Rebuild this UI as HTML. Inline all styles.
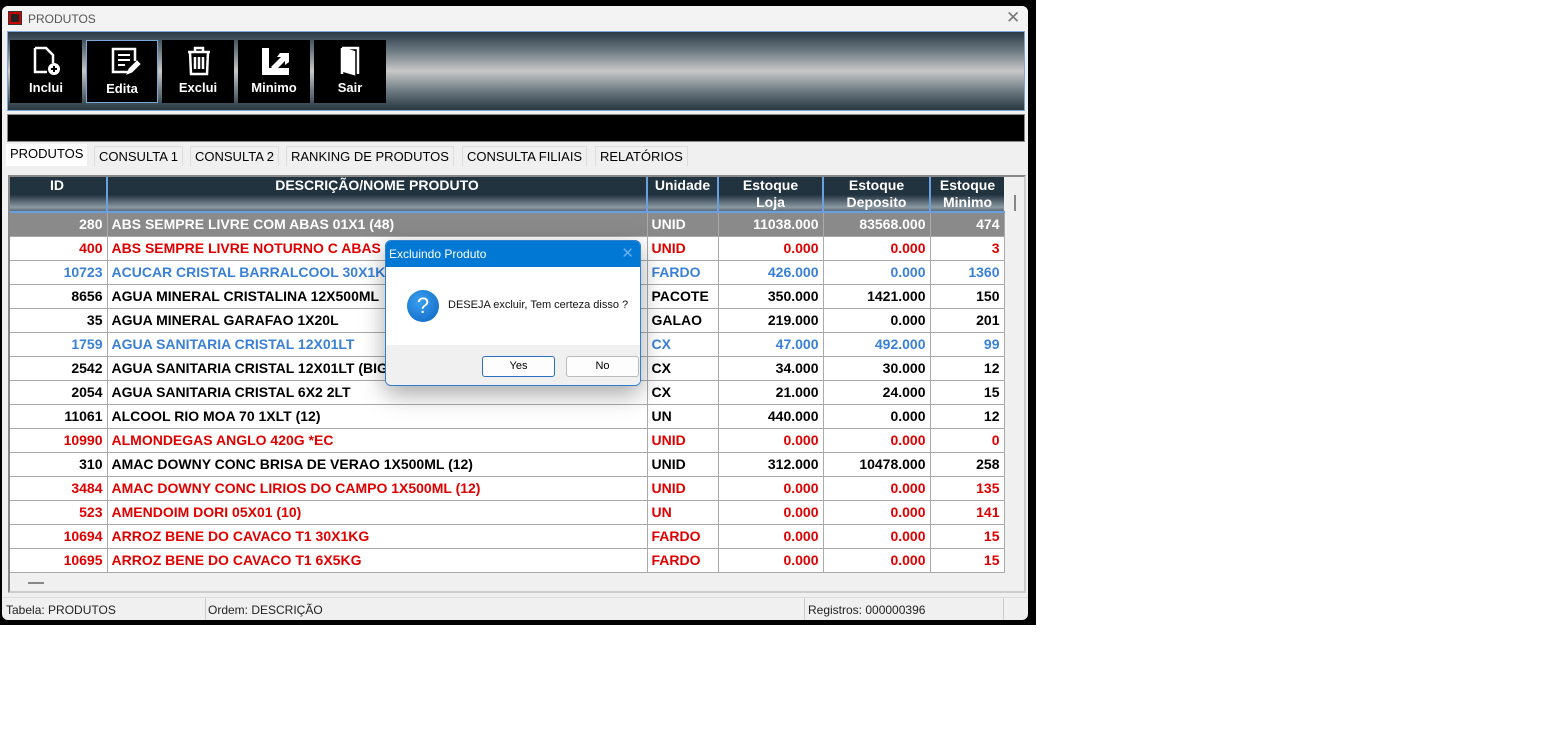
<!DOCTYPE html>
<html><head><meta charset="utf-8">
<style>
*{box-sizing:border-box;margin:0;padding:0}
body{width:1566px;height:737px;background:#fff;position:relative;overflow:hidden;font-family:"Liberation Sans",Arial,sans-serif}
.a{position:absolute}
#bg{left:0;top:0;width:1036px;height:625px;background:#000}
#win{left:2px;top:6px;width:1026px;height:614px;background:#f0f0f0;border-radius:6px;overflow:hidden}
#title{left:0;top:0;width:1026px;height:25px;background:#f3f3f3;font-size:12px;color:#555}
#tb{left:5px;top:25px;width:1018px;height:80px;border:1px solid #7aa8d8;background:linear-gradient(#2a3a45 0%,#6f7c84 25%,#c8c8c8 50%,#6f7c84 75%,#27363f 100%)}
.btn{position:absolute;top:8px;width:72px;height:63px;background:#000;color:#fff;font-weight:bold;font-size:13px;text-align:center}
.btn span{position:absolute;left:0;right:0;top:40px}
.btn svg{position:absolute;left:22px;top:5px}
#blk{left:5px;top:108px;width:1018px;height:28px;background:#000;border:1px solid #888}
.tab{position:absolute;top:140px;height:20px;font-size:13px;padding:2px 4px;border:1px solid #ddd;border-bottom:none;background:#f0f0f0}
#grid{left:6px;top:169px;width:1018px;height:418px;border:2px solid #888;border-right-color:#ccc;border-bottom-color:#ccc;background:#f0f0f0;overflow:hidden}
table{border-collapse:collapse;table-layout:fixed;position:absolute;left:-2px;top:-2px}
th{height:37px;color:#fff;font-size:14px;font-weight:bold;background:linear-gradient(#223340 0%,#223340 55%,#8c9aa3 90%,#5a6a75 100%);border-right:2px solid #6aa0e0;border-bottom:2px solid #6aa0e0;vertical-align:top;padding-top:2px;line-height:17px}
td{height:24px;font-size:14px;font-weight:bold;border-right:1px solid #aaa;border-bottom:1px solid #aaa;white-space:nowrap;overflow:hidden;padding:0 4px;background:#fff}
td.r{text-align:right}
tr.s td{background:#8a8a8a;color:#fff}
tr.R td{color:#e00000}tr.B td{color:#3a80d8}tr.K td{color:#000}
#status{left:0;top:591px;width:1026px;height:23px;font-size:12px;color:#222;border-top:1px solid #ddd}
.sep{position:absolute;top:0;width:1px;height:23px;background:#ccc}
#dlg{left:385px;top:240px;width:256px;height:146px;background:#fff;border:1px solid #2f7fd0;border-radius:6px;overflow:hidden;box-shadow:0 8px 24px rgba(0,0,0,.35)}
#dt{left:0;top:0;width:256px;height:26px;background:#0078d4;color:#fff;font-size:12px;padding:6px 3px}
#df{left:0;top:104px;width:256px;height:42px;background:#f0f0f0}
.db{position:absolute;top:11px;width:73px;height:21px;border:1px solid #bbb;border-radius:3px;background:#fdfdfd;font-size:11px;text-align:center;line-height:19px}
</style></head><body>
<div id="bg" class="a"></div>
<div id="win" class="a">
 <div id="title" class="a">
  <div class="a" style="left:6px;top:5px;width:14px;height:14px;background:#c00;border:1px solid #333"><div style="margin:2px;width:8px;height:8px;background:#222"></div></div>
  <div class="a" style="left:26px;top:6px">PRODUTOS</div>
  <div class="a" style="left:1004px;top:2px;font-size:17px;color:#777">✕</div>
 </div>
 <div id="tb" class="a">
  <div class="btn" style="left:2px"><svg width="30" height="32" viewBox="0 0 30 32" fill="none" stroke="#fff" stroke-width="2.5"><path d="M3 3h11l7 7v8M3 3v24h12"/><circle cx="22" cy="24" r="6" fill="#fff" stroke="none"/><path d="M22 21v6M19 24h6" stroke="#000" stroke-width="2"/></svg><span>Inclui</span></div>
  <div class="btn" style="left:78px;border:1px solid #7aa8d8"><svg width="32" height="32" viewBox="0 0 32 32" fill="none" stroke="#fff" stroke-width="2.5"><path d="M20 26H4V3h22v12"/><path d="M9 9h12M9 14h12M9 19h7" stroke-width="2"/><path d="M18 28l2-5 8-8 3 3-8 8z" fill="#fff" stroke-width="1"/></svg><span>Edita</span></div>
  <div class="btn" style="left:154px"><svg width="30" height="32" viewBox="0 0 30 32" fill="none" stroke="#fff" stroke-width="2.5"><path d="M4 7h22M11 7V3h8v4M6 7l1 22h16l1-22M11 12v12M15 12v12M19 12v12"/></svg><span>Exclui</span></div>
  <div class="btn" style="left:230px"><svg width="32" height="32" viewBox="0 0 32 32" fill="#fff"><path d="M2 3h7v20h20v7H2z"/><path d="M11 22l10-10-4 0 3-4h9v9l-4 3v-4L15 26z"/></svg><span>Minimo</span></div>
  <div class="btn" style="left:306px"><svg width="30" height="32" viewBox="0 0 30 32" fill="none" stroke="#fff" stroke-width="2.5"><path d="M6 3h16v26M6 3v26"/><path d="M8 4l10 3v22l-10-3z" fill="#fff"/></svg><span>Sair</span></div>
 </div>
 <div id="blk" class="a"></div>
 <div class="tab" style="left:4px;border:none;background:#fff;height:22px;top:138px">PRODUTOS</div>
 <div class="tab" style="left:92px">CONSULTA 1</div>
 <div class="tab" style="left:188px">CONSULTA 2</div>
 <div class="tab" style="left:284px">RANKING DE PRODUTOS</div>
 <div class="tab" style="left:460px">CONSULTA FILIAIS</div>
 <div class="tab" style="left:593px">RELATÓRIOS</div>
 <div id="grid" class="a">
  <table>
   <colgroup><col style="width:99px"><col style="width:540px"><col style="width:71px"><col style="width:105px"><col style="width:107px"><col style="width:74px"></colgroup>
   <tr><th>ID</th><th>DESCRIÇÃO/NOME PRODUTO</th><th>Unidade</th><th>Estoque<br>Loja</th><th>Estoque<br>Deposito</th><th style="border-right:none">Estoque<br>Minimo</th></tr>
   <tr class="s"><td class="r">280</td><td>ABS SEMPRE LIVRE COM ABAS 01X1 (48)</td><td>UNID</td><td class="r">11038.000</td><td class="r">83568.000</td><td class="r">474</td></tr>
   <tr class="R"><td class="r">400</td><td>ABS SEMPRE LIVRE NOTURNO C ABAS</td><td>UNID</td><td class="r">0.000</td><td class="r">0.000</td><td class="r">3</td></tr>
   <tr class="B"><td class="r">10723</td><td>ACUCAR CRISTAL BARRALCOOL 30X1KG</td><td>FARDO</td><td class="r">426.000</td><td class="r">0.000</td><td class="r">1360</td></tr>
   <tr class="K"><td class="r">8656</td><td>AGUA MINERAL CRISTALINA 12X500ML</td><td>PACOTE</td><td class="r">350.000</td><td class="r">1421.000</td><td class="r">150</td></tr>
   <tr class="K"><td class="r">35</td><td>AGUA MINERAL GARAFAO 1X20L</td><td>GALAO</td><td class="r">219.000</td><td class="r">0.000</td><td class="r">201</td></tr>
   <tr class="B"><td class="r">1759</td><td>AGUA SANITARIA CRISTAL 12X01LT</td><td>CX</td><td class="r">47.000</td><td class="r">492.000</td><td class="r">99</td></tr>
   <tr class="K"><td class="r">2542</td><td>AGUA SANITARIA CRISTAL 12X01LT (BIG)</td><td>CX</td><td class="r">34.000</td><td class="r">30.000</td><td class="r">12</td></tr>
   <tr class="K"><td class="r">2054</td><td>AGUA SANITARIA CRISTAL 6X2 2LT</td><td>CX</td><td class="r">21.000</td><td class="r">24.000</td><td class="r">15</td></tr>
   <tr class="K"><td class="r">11061</td><td>ALCOOL RIO MOA 70 1XLT (12)</td><td>UN</td><td class="r">440.000</td><td class="r">0.000</td><td class="r">12</td></tr>
   <tr class="R"><td class="r">10990</td><td>ALMONDEGAS ANGLO 420G *EC</td><td>UNID</td><td class="r">0.000</td><td class="r">0.000</td><td class="r">0</td></tr>
   <tr class="K"><td class="r">310</td><td>AMAC DOWNY CONC BRISA DE VERAO 1X500ML (12)</td><td>UNID</td><td class="r">312.000</td><td class="r">10478.000</td><td class="r">258</td></tr>
   <tr class="R"><td class="r">3484</td><td>AMAC DOWNY CONC LIRIOS DO CAMPO 1X500ML (12)</td><td>UNID</td><td class="r">0.000</td><td class="r">0.000</td><td class="r">135</td></tr>
   <tr class="R"><td class="r">523</td><td>AMENDOIM DORI 05X01 (10)</td><td>UN</td><td class="r">0.000</td><td class="r">0.000</td><td class="r">141</td></tr>
   <tr class="R"><td class="r">10694</td><td>ARROZ BENE DO CAVACO T1 30X1KG</td><td>FARDO</td><td class="r">0.000</td><td class="r">0.000</td><td class="r">15</td></tr>
   <tr class="R"><td class="r">10695</td><td>ARROZ BENE DO CAVACO T1 6X5KG</td><td>FARDO</td><td class="r">0.000</td><td class="r">0.000</td><td class="r">15</td></tr>
  </table>
  <div class="a" style="left:996px;top:0;width:20px;height:416px;background:#f0f0f0"><div style="margin:18px 0 0 8px;width:2px;height:16px;background:#888"></div></div>
  <div class="a" style="left:18px;top:405px;width:16px;height:2px;background:#888"></div>
 </div>
 <div id="status" class="a">
  <div class="a" style="left:4px;top:5px">Tabela: PRODUTOS</div>
  <div class="sep" style="left:203px"></div>
  <div class="a" style="left:206px;top:5px">Ordem: DESCRIÇÃO</div>
  <div class="sep" style="left:802px"></div>
  <div class="a" style="left:806px;top:5px">Registros: 000000396</div>
  <div class="sep" style="left:1001px"></div>
 </div>
</div>
<div id="dlg" class="a">
 <div id="dt" class="a">Excluindo Produto<span style="position:absolute;right:8px;top:3px;color:#6aaef0;font-size:15px">✕</span></div>
 <div class="a" style="left:21px;top:49px;width:32px;height:32px;border-radius:50%;background:radial-gradient(circle at 40% 35%,#3aa0f0,#0a62c0);color:#fff;font-size:22px;text-align:center;line-height:32px">?</div>
 <div class="a" style="left:62px;top:58px;font-size:11px;color:#111">DESEJA excluir, Tem certeza disso ?</div>
 <div id="df" class="a">
  <div class="db" style="left:96px;border:1px solid #2a6fc0">Yes</div>
  <div class="db" style="left:180px">No</div>
 </div>
</div>
</body></html>
